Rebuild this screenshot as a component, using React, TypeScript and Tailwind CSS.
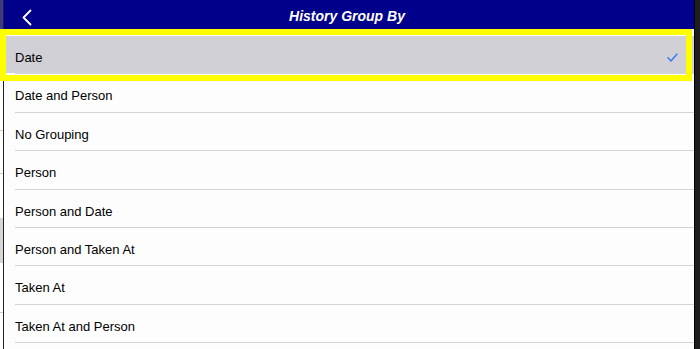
import { Fragment } from 'react';

const OPTIONS = [
  'Date',
  'Date and Person',
  'No Grouping',
  'Person',
  'Person and Date',
  'Person and Taken At',
  'Taken At',
  'Taken At and Person',
];

const selected = 'Date';

export default function App() {
  return (
    <div className="relative flex h-[349px] w-[700px] overflow-hidden bg-[#1e1e1e] font-['Liberation_Sans',Arial,sans-serif]">
      {/* sliver of the screen behind the sheet */}
      <div className="flex w-[3px] flex-col bg-white">
        <div className="h-[29px] bg-[#3a3a8c]" />
        <div className="mt-[101px] h-px bg-[#d0d0d0]" />
        <div className="mt-[42px] h-px bg-[#d0d0d0]" />
        <div className="mt-[44px] h-[45px] bg-[#d6d6d6]" />
        <div className="mt-[49px] h-px bg-[#d0d0d0]" />
      </div>

      <div className="flex w-[691px] flex-col border-l border-[#222] bg-[#fdfdfd]">
        <div className="relative flex h-[29px] items-center justify-center bg-[#00008a]">
          <button className="absolute left-[17px] top-[9px] text-white">
            <svg width="12" height="17" viewBox="0 0 12 17" fill="none">
              <path d="M9.5 1.5 L2.5 8.5 L9.5 15.5" stroke="currentColor" strokeWidth="1.8" strokeLinecap="round" strokeLinejoin="round" />
            </svg>
          </button>
          <h1 className="-ml-[4px] mt-[4px] text-[14px] font-bold italic text-white">History Group By</h1>
        </div>

        <div className="mt-[7px] flex flex-col">
          {OPTIONS.map((opt) => (
            <Fragment key={opt}>
              <div
                className={`flex h-[37.4px] items-center pl-[11px] pr-[16px] text-[13px] text-black ${
                  opt === selected ? 'bg-[#d1d0d6]' : ''
                }`}
              >
                <span className="mt-[6px] flex-1">{opt}</span>
                {opt === selected && (
                  <svg width="11" height="9" viewBox="0 0 11 9" fill="none" className="mt-[6px]">
                    <path d="M1 4.8 L4 8 L10 1" stroke="#3478f6" strokeWidth="1.4" strokeLinecap="round" strokeLinejoin="round" />
                  </svg>
                )}
              </div>
              <div className="ml-[11px] h-px bg-[#d4d4d4]" />
            </Fragment>
          ))}
        </div>
      </div>

      <div className="w-px bg-black" />

      {/* tutorial highlight frame */}
      <div className="absolute left-0 top-[29px] h-[52px] w-[692px] border-[6px] border-[#ffff00]" />
    </div>
  );
}
